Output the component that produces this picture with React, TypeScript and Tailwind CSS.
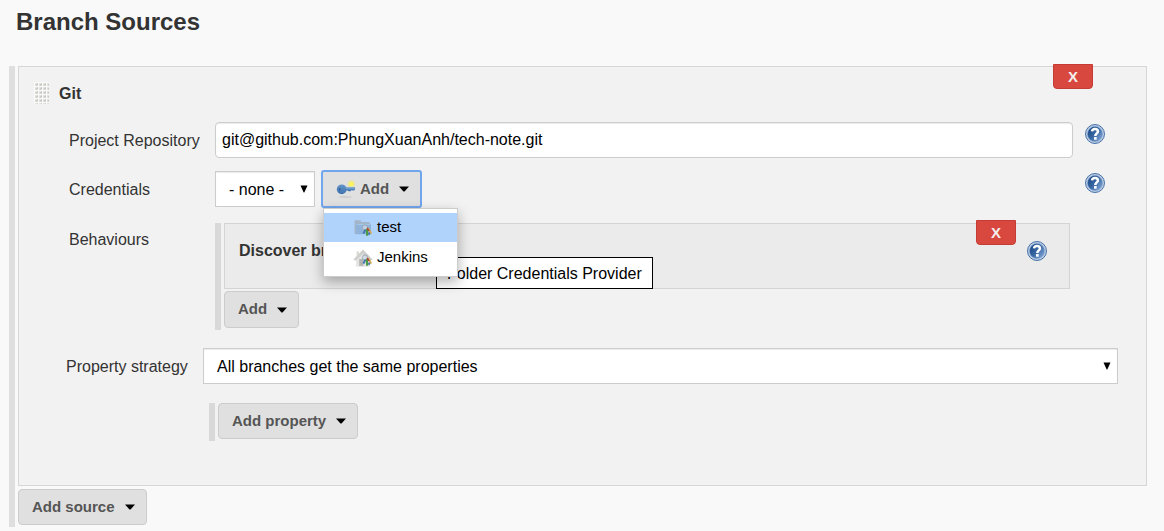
import React, { useState } from "react";

function Caret() {
  return (
    <svg width="10" height="6" viewBox="0 0 10 6" aria-hidden="true">
      <path d="M0 0.5H10L5.5 5.5H4.5Z" fill="#000" />
    </svg>
  );
}

function HelpButton({ label, className = "" }: { label: string; className?: string }) {
  return (
    <button type="button" aria-label={label} className={`block size-5 shrink-0 rounded-full ${className}`}>
      <svg width="20" height="20" viewBox="0 0 20 20" aria-hidden="true">
        <defs>
          <linearGradient id="helpFill" x1="0" y1="0.1" x2="1" y2="0.9">
            <stop offset="0.1" stopColor="#1c4a87" />
            <stop offset="0.5" stopColor="#3a68a5" />
            <stop offset="1" stopColor="#86abd9" />
          </linearGradient>
        </defs>
        <circle cx="10" cy="10" r="9.5" fill="#b9cce4" stroke="#4a72a8" strokeWidth="1" />
        <circle cx="10" cy="10" r="7.5" fill="url(#helpFill)" stroke="#7f9fc8" strokeWidth="0.5" />
        <path
          d="M7 7.4C7.2 5.7 8.4 5 10 5C11.8 5 12.9 5.9 12.9 7.4C12.9 9.3 10.3 9.5 10.3 12"
          fill="none"
          stroke="#fff"
          strokeWidth="2.5"
        />
        <rect x="9" y="13.1" width="2.7" height="2.6" rx="0.5" fill="#fff" />
      </svg>
    </button>
  );
}

function KeyIcon() {
  return (
    <svg width="20" height="20" viewBox="0 0 20 20" aria-hidden="true">
      <defs>
        <linearGradient id="keyFill" x1="0" y1="0" x2="0" y2="1">
          <stop offset="0" stopColor="#6495ca" />
          <stop offset="1" stopColor="#3f73ae" />
        </linearGradient>
      </defs>
      <ellipse cx="9.5" cy="18" rx="7" ry="1.2" fill="#cfcfcf" />
      <circle cx="15.3" cy="5" r="3.8" fill="#f5ec5a" opacity="0.45" />
      <circle cx="15.3" cy="5" r="2.2" fill="#fbf45c" />
      <circle cx="5.7" cy="10.3" r="4.9" fill="url(#keyFill)" />
      <path d="M9 8.2H19V10.6L18 11.6H16.6L15.6 11L14.6 12.2H12.6L11.6 11.4H9Z" fill="url(#keyFill)" />
      <path d="M10 9.2H18.4" stroke="#86aed9" strokeWidth="0.8" />
      <ellipse cx="3.7" cy="10.3" rx="1" ry="1.6" fill="#37669f" />
    </svg>
  );
}

function KeyBunch() {
  return (
    <g>
      <circle cx="11.8" cy="9.6" r="2.6" fill="#c9d6e4" opacity="0.8" />
      <circle cx="12" cy="9.6" r="2.7" fill="none" stroke="#8f9ba8" strokeWidth="0.7" />
      <path d="M12.4 11.6L10.4 15.6" stroke="#4678b4" strokeWidth="2" />
      <path d="M13.8 11L14.2 17.8" stroke="#4b9a45" strokeWidth="2.2" />
      <path d="M15.2 10.2L18.2 15.6" stroke="#d7a94c" strokeWidth="1.9" />
      <path d="M14.2 9.8L15.9 13" stroke="#a8423a" strokeWidth="1.5" />
      <rect x="15.3" y="14.6" width="1.8" height="2.2" fill="#3f6fae" />
    </g>
  );
}

function FolderIcon() {
  return (
    <svg width="20" height="20" viewBox="0 0 20 20" aria-hidden="true">
      <path d="M1.5 16V3.2C1.5 2.5 2 2.2 2.6 2.2H7.4L8.6 4H16C16.5 4 16.8 4.4 16.8 4.9V16Z" fill="#a3b5c8" />
      <path d="M3 16.2L3.2 6H18V16.2Z" fill="#8fb3da" />
      <path d="M3.6 6.6H17.4" stroke="#a9c8e9" strokeWidth="0.9" />
      <KeyBunch />
    </svg>
  );
}

function HomeIcon() {
  return (
    <svg width="20" height="20" viewBox="0 0 20 20" aria-hidden="true">
      <ellipse cx="10" cy="18" rx="8" ry="1" fill="#e9e9e9" />
      <path d="M3.2 9.5V17.8H16.8V9.5L10 3.5Z" fill="#e3e3e1" />
      <rect x="6.2" y="11" width="4.4" height="6.8" fill="#b4b4b2" />
      <path d="M3.6 3.4H5.8V7.5H3.6Z" fill="#d8d8d5" />
      <path d="M0.4 11.4L10 1.4L19.6 11.4L17.6 12.8L10 5.8L2.4 12.8Z" fill="#cfcfcc" />
      <KeyBunch />
    </svg>
  );
}

function DragHandle() {
  return (
    <svg width="15" height="22" viewBox="0 0 15 22" aria-hidden="true">
      <defs>
        <pattern id="grip" width="4" height="4" patternUnits="userSpaceOnUse">
          <rect width="4" height="4" fill="#fafafa" />
          <path d="M3.8 1V3.6H1.2Z" fill="#b4b4ae" />
          <rect x="1.2" y="1.2" width="2.4" height="2.4" fill="#cfcfc9" opacity="0.7" />
        </pattern>
      </defs>
      <rect width="15" height="22" fill="url(#grip)" />
    </svg>
  );
}

function MenuButton({ children, className = "h-9" }: { children: React.ReactNode; className?: string }) {
  return (
    <button
      type="button"
      className={`flex items-center gap-2.5 rounded border border-[#ccc] bg-[#e0e0e0] pr-[11px] pl-[13px] text-[15px] font-bold text-[#555] ${className}`}
    >
      {children}
      <Caret />
    </button>
  );
}

function DeleteButton({ label, className }: { label: string; className: string }) {
  return (
    <button
      type="button"
      aria-label={label}
      className={`absolute right-[53px] h-[25px] w-10 rounded-b border border-[#c43c35] bg-[#d9483f] text-[15px] leading-none font-bold text-[#f3eeee] ${className}`}
    >
      X
    </button>
  );
}

function SelectArrow() {
  return (
    <svg
      width="8"
      height="8"
      viewBox="0 0 8 8"
      aria-hidden="true"
      className="pointer-events-none absolute top-1/2 right-[7px] -translate-y-1/2"
    >
      <path d="M0.5 0.5H7.5L4.3 7.5H3.7Z" fill="#000" />
    </svg>
  );
}

const selectStyle =
  "h-9 w-full appearance-none border border-[#ccc] bg-white pt-0.5 pl-[13px] text-base text-black shadow-[inset_0_1px_1px_rgba(0,0,0,0.08)]";

export default function App() {
  const [repository, setRepository] = useState("git@github.com:PhungXuanAnh/tech-note.git");

  return (
    <main className="min-h-screen bg-[#f9f9f9] pr-[17px] pl-[9px] font-['Liberation_Sans',Arial,sans-serif] text-base text-[#333]">
      <h1 className="h-[66px] pt-1.5 pl-[7px] text-2xl leading-8 font-bold">Branch Sources</h1>

      <div className="border-l-6 border-[#dfdfdf] pb-0.5 pl-[3px]">
        <section aria-labelledby="git-title" className="relative border border-[#d6d6d6] bg-[#f2f2f2] pt-[15px] pb-11">
          <DeleteButton label="Delete Git source" className="-top-[3px]" />

          <div className="mb-[18px] flex items-center gap-2.5 pl-[15px]">
            <DragHandle />
            <h2 id="git-title" className="pt-0.5 leading-5 font-bold">Git</h2>
          </div>

          <div className="flex items-start pr-[41px] pl-[50px]">
            <label htmlFor="repository" className="w-[146px] shrink-0 pt-0.5 leading-[34px]">Project Repository</label>
            <input
              id="repository"
              type="text"
              value={repository}
              onChange={(e) => setRepository(e.target.value)}
              className="h-9 min-w-0 flex-1 rounded border border-[#ccc] bg-white px-1.5 text-base text-black shadow-[inset_0_1px_1px_rgba(0,0,0,0.08)]"
            />
            <HelpButton label="Help for Project Repository" className="mt-0.5 ml-3" />
          </div>

          <div className="mt-3 flex items-start pr-[41px] pl-[50px]">
            <label htmlFor="credentials" className="w-[146px] shrink-0 pt-0.5 leading-9">Credentials</label>
            <div className="flex flex-1 items-center gap-1.5">
              <div className="relative w-[100px]">
                <select id="credentials" className={selectStyle}>
                  <option>- none -</option>
                </select>
                <SelectArrow />
              </div>
              <div className="relative">
                <button
                  type="button"
                  aria-haspopup="menu"
                  aria-expanded="true"
                  className="flex h-[38px] items-center rounded-[3px] border-2 border-[#71a5ec] bg-[#e0e0e0] pr-[11px] pl-[13px] text-[15px] font-bold text-[#555]"
                >
                  <KeyIcon />
                  <span className="mr-2.5 ml-1">Add</span>
                  <Caret />
                </button>
                <div
                  role="menu"
                  className="absolute top-full left-0.5 z-20 flex w-[135px] flex-col gap-px border border-[#ccc] bg-white py-1 shadow-[0_5px_12px_rgba(0,0,0,0.3)]"
                >
                  <button type="button" role="menuitem" className="flex h-[29px] items-center gap-1 bg-[#b0d3fb] pl-[29px] text-[15px] text-black">
                    <FolderIcon />
                    test
                  </button>
                  <button type="button" role="menuitem" className="flex h-[29px] items-center gap-1 pl-[29px] text-[15px] text-black">
                    <HomeIcon />
                    Jenkins
                  </button>
                </div>
                <div
                  role="tooltip"
                  className="absolute top-[87px] left-[115px] z-10 border border-black bg-white px-2.5 pt-0.5 leading-7 whitespace-nowrap text-black"
                >
                  Folder Credentials Provider
                </div>
              </div>
            </div>
            <HelpButton label="Help for Credentials" className="mt-[3px]" />
          </div>

          <div className="mt-[15px] flex items-start pr-[76px] pl-[50px]">
            <span className="w-[146px] shrink-0 pt-0.5 leading-[30px]">Behaviours</span>
            <div className="flex-1 border-l-6 border-[#d9d9d9] pb-0.5 pl-[3px]">
              <div className="relative mb-0.5 h-[66px] border border-[#d4d4d4] bg-[#ebebeb] pt-[15px] pl-3.5">
                <DeleteButton label="Delete behaviour" className="-top-1" />
                <h3 className="leading-6 font-bold">Discover branches</h3>
                <HelpButton label="Help for Discover branches" className="absolute top-[17px] right-[22px]" />
              </div>
              <MenuButton className="h-[37px]">Add</MenuButton>
            </div>
          </div>

          <div className="mt-[18px] flex items-start pr-7 pl-[47px]">
            <label htmlFor="strategy" className="w-[137px] shrink-0 pt-0.5 leading-[34px]">Property strategy</label>
            <div className="relative flex-1">
              <select id="strategy" className={selectStyle}>
                <option>All branches get the same properties</option>
              </select>
              <SelectArrow />
            </div>
          </div>

          <div className="mt-[19px] ml-[190px] border-l-6 border-[#d9d9d9] pb-0.5 pl-[3px]">
            <MenuButton>Add property</MenuButton>
          </div>
        </section>

        <div className="mt-[3px]">
          <MenuButton>Add source</MenuButton>
        </div>
      </div>
    </main>
  );
}
